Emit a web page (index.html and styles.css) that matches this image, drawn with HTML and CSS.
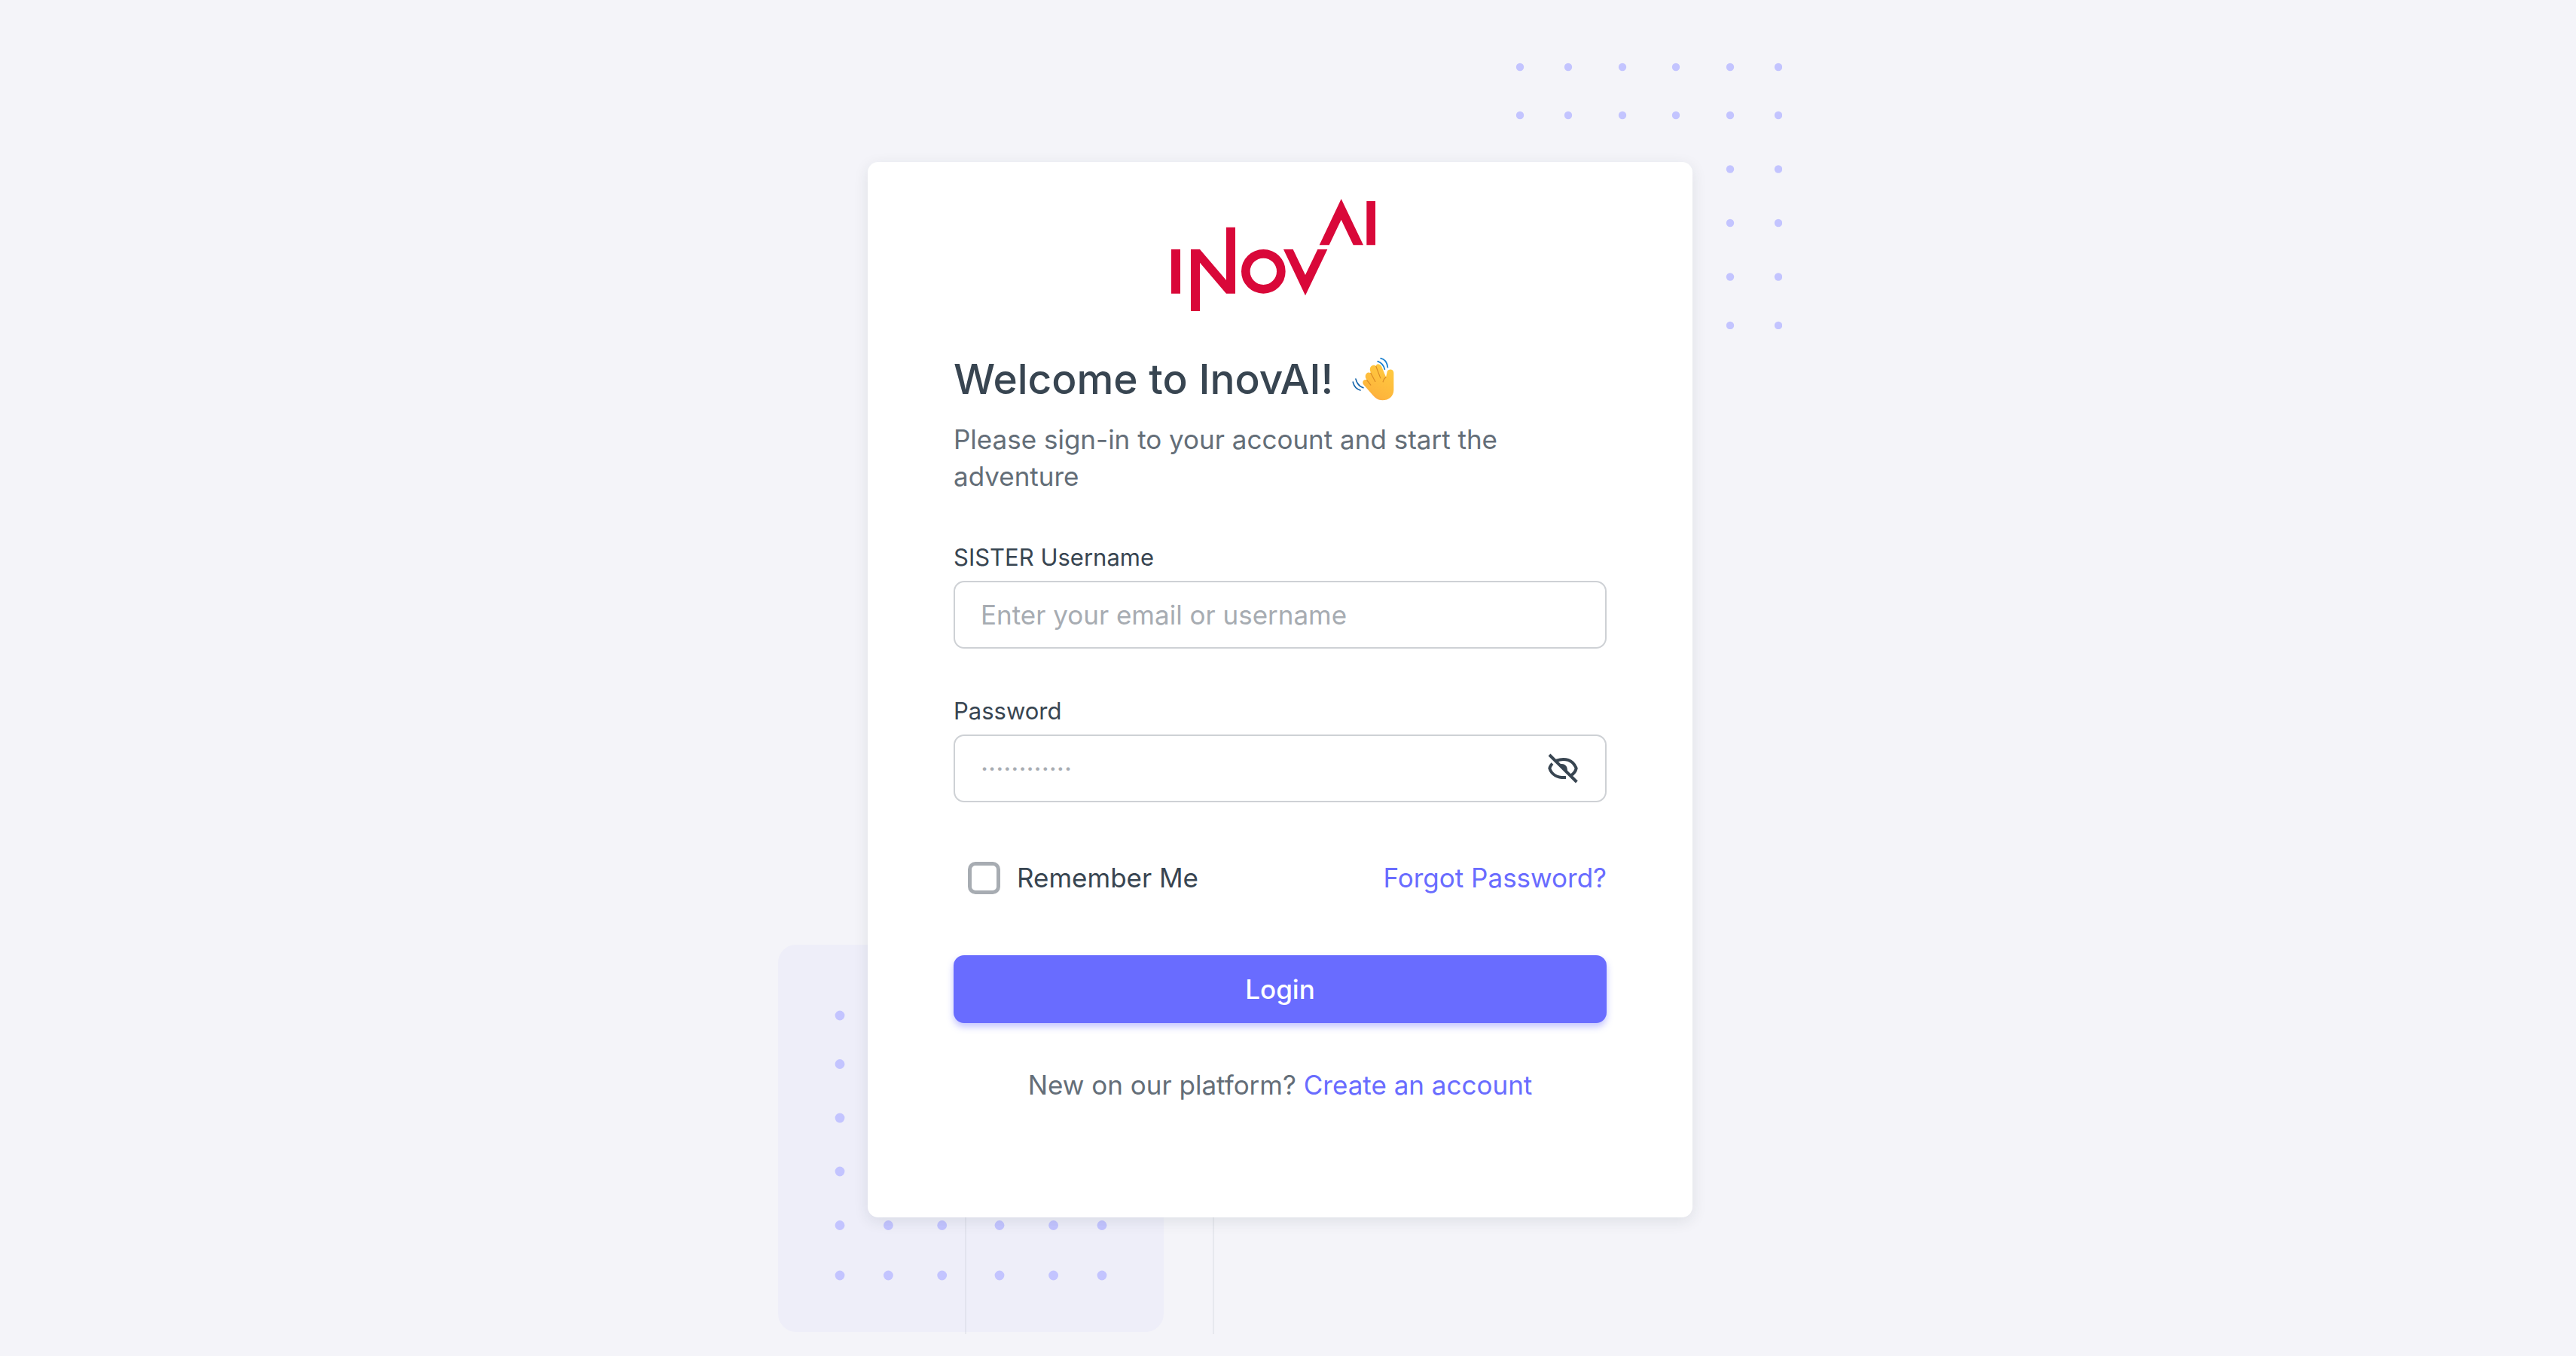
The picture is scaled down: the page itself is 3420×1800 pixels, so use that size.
FILE: index.html
```html
<!DOCTYPE html>
<html lang="en">
<head>
<meta charset="utf-8">
<meta name="viewport" content="width=device-width, initial-scale=1">
<title>InovAI - Login</title>
<link rel="stylesheet" href="styles.css">
</head>
<body>
<main class="page">
  <div class="auth">
    <svg class="decor decor-top" width="354" height="354" viewBox="0 0 354 354" aria-hidden="true">
      <g fill="#c3c4ff">
        <circle cx="6" cy="6" r="5.2"/><circle cx="70" cy="6" r="5.2"/><circle cx="142" cy="6" r="5.2"/><circle cx="213" cy="6" r="5.2"/><circle cx="285" cy="6" r="5.2"/><circle cx="349" cy="6" r="5.2"/>
        <circle cx="6" cy="70" r="5.2"/><circle cx="70" cy="70" r="5.2"/><circle cx="142" cy="70" r="5.2"/><circle cx="213" cy="70" r="5.2"/><circle cx="285" cy="70" r="5.2"/><circle cx="349" cy="70" r="5.2"/>
        <circle cx="285" cy="141.500" r="5.2"/><circle cx="349" cy="141.500" r="5.2"/>
        <circle cx="285" cy="213" r="5.2"/><circle cx="349" cy="213" r="5.2"/>
        <circle cx="285" cy="284.500" r="5.2"/><circle cx="349" cy="284.500" r="5.2"/>
        <circle cx="285" cy="349" r="5.2"/><circle cx="349" cy="349" r="5.2"/>
      </g>
    </svg>
    <svg class="decor decor-bottom" width="580" height="517" viewBox="0 0 580 517" aria-hidden="true">
      <rect width="512" height="514" rx="24" fill="#eeeef9"/>
      <g fill="#c3c4ff">
        <circle cx="82" cy="94" r="6.400"/><circle cx="82" cy="158.500" r="6.400"/><circle cx="82" cy="230" r="6.400"/><circle cx="82" cy="301" r="6.400"/>
        <circle cx="82" cy="372.500" r="6.400"/><circle cx="146.400" cy="372.500" r="6.400"/><circle cx="217.700" cy="372.500" r="6.400"/><circle cx="294" cy="372.500" r="6.400"/><circle cx="365.600" cy="372.500" r="6.400"/><circle cx="430" cy="372.500" r="6.400"/>
        <circle cx="82" cy="439" r="6.400"/><circle cx="146.400" cy="439" r="6.400"/><circle cx="217.700" cy="439" r="6.400"/><circle cx="294" cy="439" r="6.400"/><circle cx="365.600" cy="439" r="6.400"/><circle cx="430" cy="439" r="6.400"/>
      </g>
      <path d="M249 300V517M578 300V517" stroke="#22303e" stroke-opacity=".06" stroke-width="2"/>
    </svg>

    <section class="card">
      <svg class="logo" viewBox="45 42 867 447" role="img" aria-label="InovAI">
        <g fill="#d90839">
          <path d="M45 243H81V419H45ZM123 243H159L264 366V155H300V419H264L159 296V489H123ZM823 51H858V226H823Z"/>
          <path d="M492 243H530L579 345L628 243H667L579 427ZM722 42L810 226H770L722 125L674 226H635Z"/>
        </g>
        <circle cx="412" cy="331" r="70.500" fill="none" stroke="#d90839" stroke-width="35"/>
      </svg>

      <h1 class="title">Welcome to InovAI!
        <svg class="wave" viewBox="45 40 175 175" aria-hidden="true">
          <defs>
            <linearGradient id="skin" x1="0" y1="1" x2=".5" y2="0">
              <stop offset="0" stop-color="#ff9256"/>
              <stop offset=".3" stop-color="#fdb53c"/>
              <stop offset="1" stop-color="#ffc83f"/>
            </linearGradient>
          </defs>
          <path fill="url(#skin)" d="M94 150C86 139 96 127 107 132L102 122C99 106 112 97 123 104L120 92C118 74 136 67 144 76C145 64 160 66 166 77L184 120L189 98C192 86 215 86 215 103V172C215 197 195 213 170 213C151 213 139 202 127 188Z"/>
          <path fill="none" stroke="#d98a25" stroke-width="3.500" stroke-linecap="round" d="M108 133L123 152M123 104L141 138M144 77L162 124M184 120C177 126 173 132 172 139"/>
          <g fill="none" stroke="#1a7fce" stroke-width="5" stroke-linecap="round">
            <path d="M163 45Q187 50 191 81"/>
            <path d="M151 57Q173 65 179 89"/>
            <path stroke="#1565ab" d="M63 128Q70 155 93 163"/>
            <path stroke="#1565ab" d="M52 140Q57 165 81 173"/>
          </g>
        </svg>
      </h1>
      <p class="lead">Please sign-in to your account and start the adventure</p>

      <form class="form">
        <div class="field">
          <label class="label" for="username">SISTER Username</label>
          <input class="input" id="username" type="text" placeholder="Enter your email or username">
        </div>
        <div class="field">
          <label class="label" for="password">Password</label>
          <div class="input password">
            <input class="password-input" id="password" type="password" placeholder="············">
            <button class="toggle" type="button" aria-label="Show password">
              <svg viewBox="70 58 120 118" aria-hidden="true">
                <g fill="none" stroke="#384551" stroke-width="12">
                  <path d="M104 86C137 74 170 82 183 117C180 130 173 138 162 145"/>
                  <path d="M88 98C81 105 78 111 77 117C85 142 109 155 142 153"/>
                  <path d="M76 63L185 171"/>
                </g>
                <path fill="#384551" d="M114 101C134 93 152 107 147 134Z"/>
              </svg>
            </button>
          </div>
        </div>
        <div class="options">
          <label class="remember"><input class="check" type="checkbox">Remember Me</label>
          <a class="link" href="#">Forgot Password?</a>
        </div>
        <button class="submit" type="submit">Login</button>
      </form>
      <p class="signup">New on our platform? <a class="link" href="#">Create an account</a></p>
    </section>
  </div>
</main>
</body>
</html>
```
FILE: styles.css
```css
* {
  box-sizing: border-box;
}

body {
  margin: 0;
  background: #f4f4f9;
  color: #646e78;
  font-family: Inter, "Liberation Sans", sans-serif;
  font-size: 35px;
  line-height: 50px;
}

.page {
  display: flex;
  align-items: flex-start;
  justify-content: center;
  min-height: 100vh;
  padding: 215px 21px 28px 0;
  overflow: hidden;
}

.auth {
  position: relative;
  width: 100%;
  max-width: 1095px;
}

.decor {
  position: absolute;
}

.decor-top {
  top: -132px;
  right: -119px;
}

.decor-bottom {
  bottom: -155px;
  left: -119px;
}

.card {
  position: relative;
  padding: 49px 114px 151px;
  border-radius: 14px;
  background: #fff;
  box-shadow: 0 5px 19px rgba(34, 48, 62, 0.1);
}

.logo {
  display: block;
  width: 289px;
  height: 149px;
  margin: 0 auto 54px;
}

.title {
  display: flex;
  align-items: center;
  gap: 24px;
  margin: 0 0 20px;
  color: #384551;
  font-size: 55px;
  font-weight: 500;
  line-height: 72px;
}

.wave {
  width: 58px;
  height: 58px;
}

.lead {
  margin: 0 0 60px;
  line-height: 49px;
}

.field {
  display: flex;
  flex-direction: column;
  gap: 8px;
  margin-bottom: 60px;
}

.label {
  color: #384551;
  font-size: 31px;
  line-height: 46px;
}

.input {
  width: 100%;
  height: 90px;
  padding: 0 34px;
  border: 2px solid #ced1d5;
  border-radius: 14px;
  background: #fff;
  color: #384551;
  font: inherit;
}

.password {
  display: flex;
  align-items: center;
}

.password-input {
  flex: 1;
  min-width: 0;
  padding: 0;
  border: 0;
  outline: 0;
  background: transparent;
  color: #384551;
  font: inherit;
}

.input::placeholder,
.password-input::placeholder {
  color: #a7acb2;
  opacity: 1;
}

.toggle {
  display: flex;
  padding: 0 2px;
  border: 0;
  background: none;
}

.toggle svg {
  width: 40px;
  height: 40px;
}

.options {
  display: flex;
  align-items: center;
  justify-content: space-between;
  margin: 75px 0 78px;
}

.remember {
  display: flex;
  align-items: center;
  gap: 22px;
  padding-left: 19px;
  color: #384551;
}

.check {
  width: 43px;
  height: 43px;
  margin: 0;
  border: 5px solid #a7acb2;
  border-radius: 10px;
  appearance: none;
  background: #fff;
}

.check:checked {
  border-color: #696cff;
  background: #696cff;
}

.link {
  color: #696cff;
  text-decoration: none;
}

.submit {
  display: block;
  width: 100%;
  height: 90px;
  border: 0;
  border-radius: 14px;
  background: #696cff;
  box-shadow: 0 5px 10px rgba(105, 108, 255, 0.4);
  color: #fff;
  font: inherit;
  font-weight: 500;
}

.signup {
  margin: 57px 0 0;
  text-align: center;
}
```
